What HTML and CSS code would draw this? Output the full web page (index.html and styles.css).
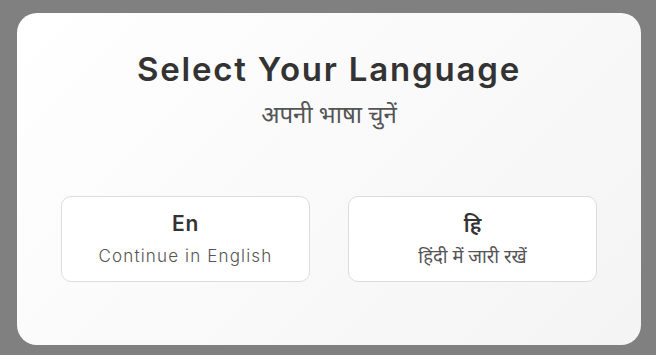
FILE: index.html
```html
<!DOCTYPE html>
<html lang="en">
<head>
<meta charset="utf-8">
<title>Select Your Language</title>
<link rel="stylesheet" href="styles.css">
</head>
<body>
<div class="overlay">
  <div class="modal">
    <h1 class="title">Select Your Language</h1>
    <p class="subtitle" lang="hi">अपनी भाषा चुनें</p>
    <div class="options">
      <button class="option">
        <span class="code">En</span>
        <span class="label">Continue in English</span>
      </button>
      <button class="option" lang="hi">
        <span class="code hi">हि</span>
        <span class="label hi">हिंदी में जारी रखें</span>
      </button>
    </div>
  </div>
</div>
</body>
</html>
```

FILE: styles.css
```css
html, body {
  margin: 0;
  padding: 0;
  height: 100%;
}
body {
  background: #808080;
  font-family: Inter, "Noto Sans", "DejaVu Sans", sans-serif;
}
.overlay {
  padding: 13px 0 0 17px;
}
.modal {
  box-sizing: border-box;
  width: 624px;
  height: 332px;
  border-radius: 20px;
  background: linear-gradient(135deg, #ffffff 0%, #f4f4f4 100%);
  padding: 36px 44px 0;
  display: flex;
  flex-direction: column;
  align-items: center;
}
.title {
  margin: 0;
  font-size: 33px;
  font-weight: 600;
  color: #333333;
  line-height: 40px;
  letter-spacing: 1.8px;
}
.subtitle {
  margin: 9px 0 0;
  font-family: "Noto Sans", sans-serif;
  font-size: 24px;
  line-height: 32px;
  color: #555555;
}
.options {
  margin-top: 66px;
  align-self: stretch;
  display: grid;
  grid-template-columns: 1fr 1fr;
  gap: 38px;
}
.option {
  box-sizing: border-box;
  height: 86px;
  background: #ffffff;
  border: 1px solid #dddddd;
  border-radius: 10px;
  display: flex;
  flex-direction: column;
  align-items: center;
  justify-content: center;
  gap: 7px;
  font-family: inherit;
  padding: 0;
}
.code {
  font-size: 21px;
  font-weight: 600;
  color: #333333;
  line-height: 26px;
  letter-spacing: 0.8px;
}
.label {
  font-size: 17px;
  font-weight: 300;
  color: #555555;
  line-height: 24px;
  letter-spacing: 1.15px;
}
.hi {
  font-family: "Noto Sans", sans-serif;
  letter-spacing: 0;
}
.label.hi {
  font-size: 18.5px;
  font-weight: 400;
  color: #555555;
}
```
